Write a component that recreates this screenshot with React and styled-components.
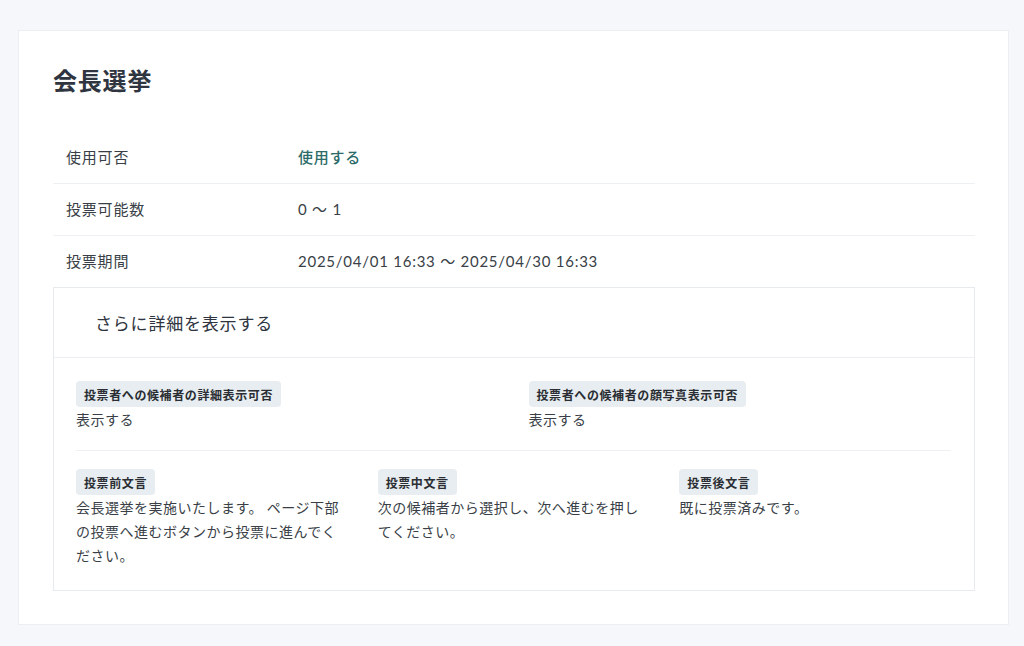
import React from "react";
import styled, { createGlobalStyle } from "styled-components";

const Global = createGlobalStyle`
  html, body { margin: 0; padding: 0; background: #f5f7fa; }
  body {
    font-family: "Noto Sans CJK JP", "Noto Sans", sans-serif;
    color: #3a3f47;
    letter-spacing: 0.05em;
  }
`;

const Page = styled.div`
  padding: 30px 15px 22px 18px;
  min-height: 646px;
  box-sizing: border-box;
`;

const Card = styled.div`
  background: #fff;
  border: 1px solid #eceff2;
  padding: 31px 33px 33px 34px;
`;

const Title = styled.h1`
  margin: 0 0 34px;
  font-size: 24px;
  line-height: 36px;
  font-weight: 700;
  color: #2f3540;
`;

const Table = styled.div`
  display: flex;
  flex-direction: column;
`;

const Row = styled.div`
  display: grid;
  grid-template-columns: 245px 1fr;
  height: 48px;
  padding-bottom: 3px;
  align-items: center;
  border-bottom: ${(p) => (p.$last ? "none" : "1px solid #eef1f4")};
  font-size: 15px;
`;

const Label = styled.div`
  padding-left: 13px;
  color: #3a3f47;
`;

const Value = styled.div`
  color: ${(p) => (p.$accent ? "#2c6b68" : "#3a3f47")};
  font-weight: ${(p) => (p.$accent ? 500 : 400)};
  font-family: ${(p) =>
    p.$num ? '"Lato", "Noto Sans CJK JP", sans-serif' : "inherit"};
  letter-spacing: ${(p) => (p.$num ? "0.75px" : "0.05em")};
`;

const Details = styled.div`
  border: 1px solid #e8ebee;
`;

const DetailsHeader = styled.div`
  height: 69px;
  display: flex;
  align-items: center;
  padding-left: 41px;
  font-size: 17px;
  color: #2f3540;
  border-bottom: 1px solid #eceff2;
`;

const DetailsBody = styled.div`
  padding: 23px 23px 23px 22px;
`;

const Grid = styled.div`
  display: grid;
  grid-template-columns: repeat(${(p) => p.$cols}, 1fr);
  column-gap: 30px;
`;

const Divider = styled.div`
  height: 1px;
  background: #eef1f4;
  margin: 19px 0 18px;
`;

const Item = styled.div`
  display: flex;
  flex-direction: column;
  align-items: flex-start;
`;

const Badge = styled.span`
  display: inline-flex;
  align-items: center;
  height: 26px;
  padding: 0 8px;
  border-radius: 4px;
  background: #e7edf0;
  font-size: 12px;
  letter-spacing: 0.6px;
  font-weight: 700;
  color: #2a2d33;
`;

const Text = styled.div`
  font-size: 14px;
  line-height: 24px;
  letter-spacing: 0.5px;
  color: #3a3f47;
`;

export default function App() {
  return (
    <>
      <Global />
      <Page>
        <Card>
          <Title>会長選挙</Title>
          <Table>
            <Row>
              <Label>使用可否</Label>
              <Value $accent>使用する</Value>
            </Row>
            <Row>
              <Label>投票可能数</Label>
              <Value $num>0 〜 1</Value>
            </Row>
            <Row $last>
              <Label>投票期間</Label>
              <Value $num>2025/04/01 16:33 〜 2025/04/30 16:33</Value>
            </Row>
          </Table>
          <Details>
            <DetailsHeader>さらに詳細を表示する</DetailsHeader>
            <DetailsBody>
              <Grid $cols={2}>
                <Item>
                  <Badge>投票者への候補者の詳細表示可否</Badge>
                  <Text>表示する</Text>
                </Item>
                <Item>
                  <Badge>投票者への候補者の顔写真表示可否</Badge>
                  <Text>表示する</Text>
                </Item>
              </Grid>
              <Divider />
              <Grid $cols={3}>
                <Item>
                  <Badge>投票前文言</Badge>
                  <Text>
                    会長選挙を実施いたします。 ページ下部の投票へ進むボタンから投票に進んでください。
                  </Text>
                </Item>
                <Item>
                  <Badge>投票中文言</Badge>
                  <Text>次の候補者から選択し、次へ進むを押してください。</Text>
                </Item>
                <Item>
                  <Badge>投票後文言</Badge>
                  <Text>既に投票済みです。</Text>
                </Item>
              </Grid>
            </DetailsBody>
          </Details>
        </Card>
      </Page>
    </>
  );
}
